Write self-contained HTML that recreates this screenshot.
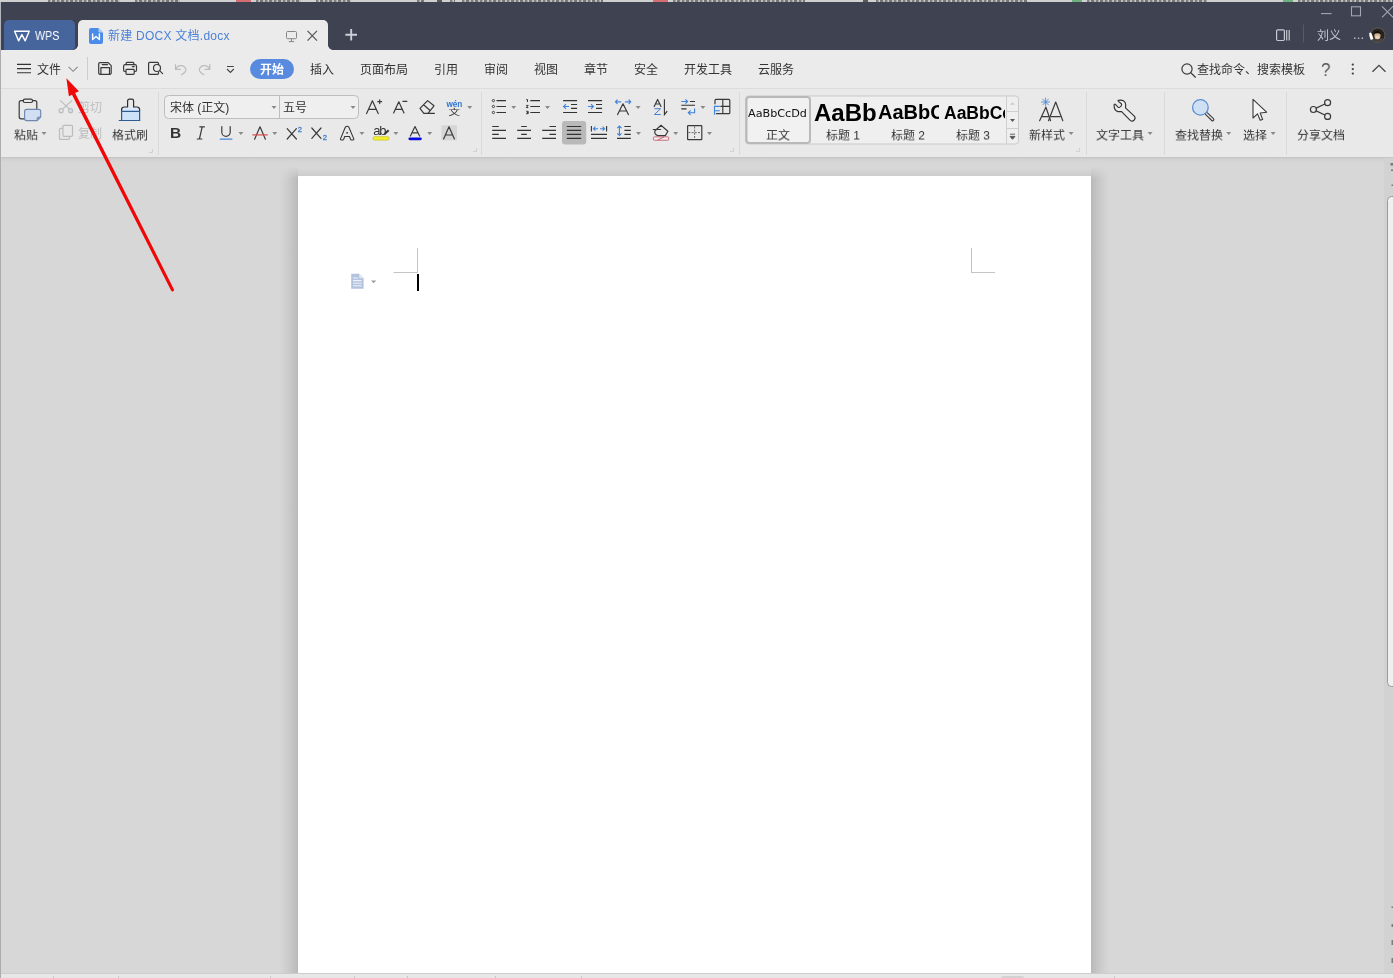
<!DOCTYPE html>
<html lang="zh-CN">
<head>
<meta charset="utf-8">
<title>新建 DOCX 文档.docx - WPS</title>
<style>
html,body{margin:0;padding:0;}
body{width:1393px;height:978px;overflow:hidden;position:relative;background:#d7d7d7;
  font-family:"Liberation Sans","Noto Sans CJK SC",sans-serif;font-size:12px;color:#2b2b2b;}
.abs{position:absolute;}
.t{will-change:transform;position:absolute;white-space:nowrap;line-height:16px;height:16px;font-size:12px;color:#333;}
.g{color:#bdbdbd;}
#topstrip{left:0;top:0;width:1393px;height:2px;background:#d0d0d0;overflow:hidden;}
#topstrip i{position:absolute;top:0;height:2px;opacity:.62}
#titlebar{left:0;top:2px;width:1393px;height:48px;background:#3e4251;}
#leftedge{left:0;top:2px;width:1px;height:976px;background:linear-gradient(#b4b6bd 0,#b4b6bd 48px,#adadad 48px);}
#wpstab{left:4px;top:20px;width:71px;height:29.5px;background:#46659c;border-radius:5px 5px 4px 0;}
#doctab{left:78px;top:20px;width:250px;height:30px;background:#ebebeb;border-radius:5px 5px 0 0;}
.flare{position:absolute;bottom:0;width:5px;height:5px;overflow:hidden;}
#menurow{left:0;top:50px;width:1393px;height:38px;background:#ebebeb;}
#ribbon{left:0;top:88px;width:1393px;height:69px;background:#e9e9e9;border-top:1px solid #dcdcdc;box-sizing:border-box;}
#ribbonshadow{left:0;top:157px;width:1393px;height:6px;background:linear-gradient(#c3c3c3,#d1d1d1 35%,#d7d7d7);}
.vsep{position:absolute;top:92px;width:1px;height:63px;background:#dadada;}
#page{left:298px;top:176px;width:793px;height:830px;background:#fff;}
#docclip{left:1px;top:158px;width:1392px;height:815px;overflow:hidden;}
#status{left:0;top:973px;width:1393px;height:5px;background:#e7e7e7;border-top:1px solid #cdcdcd;box-sizing:border-box;}
#status i{position:absolute;top:2px;width:1px;height:3px;background:#c8c8c8;}
#pill{left:250px;top:59px;width:44px;height:20px;border-radius:10px;background:#588ae0;}
.box{position:absolute;box-sizing:border-box;}

svg .k{stroke:#3a3a3a;fill:none;stroke-width:1.2;stroke-linecap:round;stroke-linejoin:round;}
svg .b{stroke:#4787dc;fill:none;stroke-width:1.2;stroke-linecap:round;stroke-linejoin:round;}
svg .gr{stroke:#bcbcbc;fill:none;stroke-width:1.2;stroke-linecap:round;stroke-linejoin:round;}
svg .w{stroke:#c6cad4;fill:none;stroke-width:1.2;}
svg .ar{fill:#898989;stroke:none;}
svg .kl{stroke:#333;fill:none;stroke-width:1.1;stroke-linecap:butt;stroke-linejoin:miter;}
svg .bl{stroke:#3f82d8;fill:none;stroke-width:1.1;stroke-linecap:butt;stroke-linejoin:miter;}
svg text{font-family:"Liberation Sans","Noto Sans CJK SC",sans-serif;}
</style>
</head>
<body>
<div id="topstrip" class="abs"><i style="left:48px;width:72px;background:repeating-linear-gradient(90deg,#4a4a4a 0 2px,#8e8e8e 2px 3px,#c4c4c4 3px 4px,#3f3f3f 4px 7px,#b0b0b0 7px 9px)"></i><i style="left:135px;width:45px;background:repeating-linear-gradient(90deg,#4a4a4a 0 2px,#8e8e8e 2px 3px,#c4c4c4 3px 4px,#3f3f3f 4px 7px,#b0b0b0 7px 9px)"></i><i style="left:256px;width:45px;background:repeating-linear-gradient(90deg,#4a4a4a 0 2px,#8e8e8e 2px 3px,#c4c4c4 3px 4px,#3f3f3f 4px 7px,#b0b0b0 7px 9px)"></i><i style="left:316px;width:35px;background:repeating-linear-gradient(90deg,#4a4a4a 0 2px,#8e8e8e 2px 3px,#c4c4c4 3px 4px,#3f3f3f 4px 7px,#b0b0b0 7px 9px)"></i><i style="left:417px;width:7px;background:repeating-linear-gradient(90deg,#4a4a4a 0 2px,#8e8e8e 2px 3px,#c4c4c4 3px 4px,#3f3f3f 4px 7px,#b0b0b0 7px 9px)"></i><i style="left:450px;width:5px;background:repeating-linear-gradient(90deg,#4a4a4a 0 2px,#8e8e8e 2px 3px,#c4c4c4 3px 4px,#3f3f3f 4px 7px,#b0b0b0 7px 9px)"></i><i style="left:462px;width:141px;background:repeating-linear-gradient(90deg,#4a4a4a 0 2px,#8e8e8e 2px 3px,#c4c4c4 3px 4px,#3f3f3f 4px 7px,#b0b0b0 7px 9px)"></i><i style="left:673px;width:132px;background:repeating-linear-gradient(90deg,#4a4a4a 0 2px,#8e8e8e 2px 3px,#c4c4c4 3px 4px,#3f3f3f 4px 7px,#b0b0b0 7px 9px)"></i><i style="left:876px;width:151px;background:repeating-linear-gradient(90deg,#4a4a4a 0 2px,#8e8e8e 2px 3px,#c4c4c4 3px 4px,#3f3f3f 4px 7px,#b0b0b0 7px 9px)"></i><i style="left:1087px;width:120px;background:repeating-linear-gradient(90deg,#4a4a4a 0 2px,#8e8e8e 2px 3px,#c4c4c4 3px 4px,#3f3f3f 4px 7px,#b0b0b0 7px 9px)"></i><i style="left:1298px;width:95px;background:repeating-linear-gradient(90deg,#4a4a4a 0 2px,#8e8e8e 2px 3px,#c4c4c4 3px 4px,#3f3f3f 4px 7px,#b0b0b0 7px 9px)"></i><i style="left:236px;width:15px;background:#d8303a"></i><i style="left:653px;width:15px;background:#d8303a"></i><i style="left:437px;width:5px;background:#111"></i><i style="left:863px;width:5px;background:#111"></i><i style="left:1072px;width:10px;background:#2e9c4a"></i><i style="left:1283px;width:10px;background:#2e9c4a"></i></div>
<div id="titlebar" class="abs"></div>
<div id="wpstab" class="abs"></div>
<div id="doctab" class="abs"></div>
<div class="abs" style="left:73px;top:45px;width:5px;height:5px;background:radial-gradient(circle at 0 0,rgba(235,235,235,0) 4.5px,#ebebeb 5.2px)"></div>
<div class="abs" style="left:328px;top:45px;width:5px;height:5px;background:radial-gradient(circle at 100% 0,rgba(235,235,235,0) 4.5px,#ebebeb 5.2px)"></div>
<div id="menurow" class="abs"></div>
<div id="ribbon" class="abs"></div>
<div id="ribbonshadow" class="abs"></div>
<div id="docclip" class="abs">
<div class="abs" style="left:279px;top:9px;width:18px;height:810px;background:linear-gradient(to right,rgba(185,185,185,0),rgba(185,185,185,.36) 45%,#b9b9b9);-webkit-mask-image:linear-gradient(transparent,#000 12px);mask-image:linear-gradient(transparent,#000 12px);"></div>
<div class="abs" style="left:1090px;top:9px;width:18px;height:810px;background:linear-gradient(to left,rgba(185,185,185,0),rgba(185,185,185,.36) 45%,#b9b9b9);-webkit-mask-image:linear-gradient(transparent,#000 12px);mask-image:linear-gradient(transparent,#000 12px);"></div>
<div class="abs" style="left:297px;top:11px;width:793px;height:7px;background:linear-gradient(rgba(204,204,204,0),#cccccc);"></div>
<div id="page" class="abs" style="left:297px;top:18px"></div></div>
<div id="status" class="abs"><i style="left:53px"></i><i style="left:118px"></i><i style="left:270px"></i><i style="left:354px"></i><i style="left:407px"></i><i style="left:495px"></i><i style="left:581px"></i><i style="left:1114px"></i><i style="left:1001px;width:23px;height:2px;top:2px;background:#d2d2d2;border-radius:2px 2px 0 0"></i></div>
<div id="leftedge" class="abs"></div>
<svg class="abs" id="ic1" style="left:0;top:0;will-change:transform" width="1393" height="160" viewBox="0 0 1393 160">
<!-- title bar -->
<path d="M14.6 31.2 H29.2 L25.2 40.8 L21.9 34.6 L18.6 40.8 Z" fill="none" stroke="#fff" stroke-width="1.45" stroke-linejoin="round"/>
<path d="M91 28 h7.5 l4.5 4.5 v9.5 a2 2 0 0 1 -2 2 h-10 a2 2 0 0 1 -2 -2 v-12 a2 2 0 0 1 2 -2 z" fill="#4b8cea"/>
<path d="M98.5 28 l4.5 4.5 h-3.3 a1.2 1.2 0 0 1 -1.2 -1.2 z" fill="#a9c8f5"/>
<path d="M92.6 34 V39.6 L96 36.6 L99.4 39.6 V34" fill="none" stroke="#fff" stroke-width="1.4" stroke-linejoin="round" stroke-linecap="round"/>
<g stroke="#858585" fill="none" stroke-width="1"><rect x="286.5" y="31.5" width="10" height="7.2" rx="1"/><path d="M291.5 39 v2.6 M288.8 41.6 h5.4"/></g>
<path d="M307.5 30.8 L317 40.6 M317 30.8 L307.5 40.6" stroke="#555" stroke-width="1.2" fill="none"/>
<path d="M345.4 34.8 H357 M351.2 29 V40.6" stroke="#cdcfd8" stroke-width="1.9" fill="none"/>
<path d="M1321 13.6 h10.6" stroke="#a3a7b2" stroke-width="1.1"/>
<rect x="1351.5" y="6.8" width="9" height="9" fill="none" stroke="#a3a7b2" stroke-width="1.1"/>
<path d="M1382 6.3 l11 11 M1393 6.3 l-11 11" stroke="#a3a7b2" stroke-width="1.1"/>
<g class="w"><rect x="1276.6" y="29.9" width="7.8" height="10.6" rx="1.2"/><path d="M1286.7 30 v10.5 M1289.2 30 v10.5"/></g>
<path d="M1303.5 24.5 v18" stroke="#575b69" stroke-width="1"/>
<circle cx="1377.7" cy="35.2" r="7.3" fill="#2a231e" stroke="#5a5e5c" stroke-width="1"/>
<path d="M1369.2 33 q1.4 -1 2.4 0.4 l2.2 6 l-3.2 0.4 q-1.6 -3.2 -1.4 -6.8z" fill="#fff"/>
<path d="M1372.2 39.6 a6.5 5 0 0 1 11 0 a7 7 0 0 1 -11 0z" fill="#4b423e"/>
<ellipse cx="1377.4" cy="35.6" rx="3.1" ry="3.7" fill="#d3af8d"/>
<ellipse cx="1377.4" cy="37.2" rx="2.4" ry="1.6" fill="#e6d3c0"/>
<path d="M1373.6 34.4 a3.9 4.4 0 0 1 7.6 0 a5 2.6 0 0 0 -7.6 0z" fill="#120d09"/>
<!-- menu row -->
<path class="kl" stroke-width="1.2" d="M17 64.4 h14 M17 68.6 h14 M17 72.8 h14"/>
<path d="M68.6 66.8 L73.1 71.3 L77.6 66.8" fill="none" stroke="#8a8a8a" stroke-width="1.1"/>
<path d="M87.5 57 v23" stroke="#cdcdcd" stroke-width="1"/>
<g class="k" stroke-width="1.25"><path d="M99.9 62.7 h8.3 l3 3 v7.4 a1.2 1.2 0 0 1 -1.2 1.2 h-10.1 a1.2 1.2 0 0 1 -1.2 -1.2 v-9.2 a1.2 1.2 0 0 1 1.2 -1.2 z"/><path d="M102.2 64.6 h5.4 M100.9 74 v-6.4 h8.6 v6.4"/></g>
<g class="k" stroke-width="1.25"><path d="M126.1 64.6 v-1.2 a1 1 0 0 1 1 -1 h5.8 a1 1 0 0 1 1 1 v1.2"/><rect x="123.6" y="64.7" width="12.9" height="6.8" rx="1.6"/><rect x="126" y="69.4" width="8.2" height="4.9" rx="0.8" fill="#ebebeb"/><path d="M132.4 66.7 h1.8"/></g>
<g class="k" stroke-width="1.25"><path d="M158.5 64.6 v-1.2 a1 1 0 0 0 -1 -1 h-7.9 a1 1 0 0 0 -1 1 v9.9 a1 1 0 0 0 1 1 h7.9 a1 1 0 0 0 1 -1 v-1"/><circle cx="157" cy="68" r="3.5"/><path d="M159.6 70.6 l3 3"/></g>
<g class="gr" stroke-width="1.15"><path d="M175.5 64.6 V69.4 H180.3 M175.9 69 A5.3 5.2 0 0 1 186 69.4 C186 71.6 184 73.2 181.4 74.7"/></g>
<g class="gr" stroke-width="1.15"><path d="M209.8 64.6 V69.4 H205 M209.4 69 A5.3 5.2 0 0 0 199.3 69.4 C199.3 71.6 201.3 73.2 203.9 74.7"/></g>
<path d="M227 66.5 h6.8 M227 69 l3.4 3.5 l3.4 -3.5" fill="none" stroke="#444" stroke-width="1.1"/>
<g class="k" stroke-width="1.3"><circle cx="1187" cy="69" r="5.1"/><path d="M1190.8 72.8 l4.6 4.4"/></g>
<g fill="#444"><circle cx="1352.8" cy="64.6" r="1.15"/><circle cx="1352.8" cy="69.1" r="1.15"/><circle cx="1352.8" cy="73.6" r="1.15"/></g>
<path d="M1372.5 71.8 L1379 65.3 L1385.5 71.8" fill="none" stroke="#444" stroke-width="1.3"/>

<!-- group separators & launchers -->
<g stroke="#dadada" stroke-width="1"><path d="M158.5 92 v63 M481.5 92 v63 M739.5 92 v63 M1086.5 92 v63 M1164.5 92 v63 M1286.5 92 v63"/></g>
<g stroke="#d0d0d0" stroke-width="1" fill="none"><path d="M152.5 149 v3.5 h-3.5 M476.5 148 v3.5 h-3.5 M733.5 148 v3.5 h-3.5 M1079.5 148 v3.5 h-3.5"/></g>
<!-- paste -->
<g class="k" stroke-width="1.25"><path d="M36.8 109 v-6.4 a2 2 0 0 0 -2 -2 h-13.6 a2 2 0 0 0 -2 2 v14.2 a2 2 0 0 0 2 2 h3.4"/><rect x="23.3" y="99.2" width="9.2" height="3.3" rx="1.5" fill="#e9e9e9"/></g>
<path d="M26.6 109.4 h12.1 a2 2 0 0 1 2 2 v5.6 l-3.6 3.6 h-10.5 a2 2 0 0 1 -2 -2 v-7.2 a2 2 0 0 1 2 -2 z" fill="#d2dff2" stroke="#6f88b0" stroke-width="1.15"/>
<path d="M40.7 117 h-2.4 a1.2 1.2 0 0 0 -1.2 1.2 v2.4 z" fill="#8da3c6" stroke="#6f88b0" stroke-width="0.8"/>
<path class="ar" d="M41.5 132.1 h5 l-2.5 2.9 z"/>
<!-- cut / copy -->
<g class="gr" stroke-width="1.15"><path d="M60.4 100.6 L69.3 108.9 M71.9 100.6 L62.8 108.9"/><circle cx="61.1" cy="110.7" r="2"/><circle cx="70.6" cy="110.7" r="2" fill="#cfe3f3"/></g>
<g class="gr" stroke-width="1.15"><rect x="59.5" y="128.4" width="10" height="11" rx="1"/><rect x="62.9" y="125.3" width="9.6" height="11" rx="1" fill="#e9e9e9"/></g>
<!-- format painter -->
<path d="M127.6 107 h-3.4 a2.6 2.6 0 0 0 -2.6 2.6 v1.8 h18 v-1.8 a2.6 2.6 0 0 0 -2.6 -2.6 h-3.4 z" fill="#dbeafb"/>
<rect x="121.6" y="111.4" width="18" height="9" fill="#cde3fa"/>
<g stroke="#2d2d2d" stroke-width="1.2" stroke-linejoin="round" stroke-linecap="round" fill="none"><path d="M121.6 111 v-1.4 a2.6 2.6 0 0 1 2.6 -2.6 h3.4 v-6 a1.8 1.8 0 0 1 1.8 -1.8 h2.4 a1.8 1.8 0 0 1 1.8 1.8 v6 h3.4 a2.6 2.6 0 0 1 2.6 2.6 v1.4"/></g>
<g stroke="#2f5c92" stroke-width="1.2" stroke-linejoin="round" stroke-linecap="round" fill="none"><path d="M121.6 111 v9.4 M139.6 111 v9.4 M121.6 111.4 h18 M119.2 120.5 h20.6"/></g>
<!-- font boxes -->
<rect x="164.5" y="95.5" width="194" height="23" rx="4" fill="#efefef" stroke="#bdbdbd"/>
<path d="M279.5 96 v22" stroke="#bdbdbd"/>
<path class="ar" d="M271.5 106.1 h5 l-2.5 2.9 z M350.5 106.1 h5 l-2.5 2.9 z"/>
<!-- I U A X2 -->
<g class="k" stroke-width="1.3"><path d="M199.8 126.8 h4.6 M197.2 139 h4.6 M202.2 126.8 L199.4 139"/></g>
<path class="k" stroke-width="1.3" d="M221.8 126.6 v5.6 a4.2 4.2 0 0 0 8.4 0 v-5.6"/>
<path class="b" stroke-width="1.3" d="M220.3 139.2 h11.6"/>
<path class="ar" d="M238.4 132.1 h5 l-2.5 2.9 z M272.2 132.1 h5 l-2.5 2.9 z"/>
<path class="k" stroke-width="1.1" d="M254.6 139.2 L260 126.8 L265.4 139.2"/>
<path d="M252.4 134.9 h15.4" stroke="#e04a4a" stroke-width="1.2"/>
<path class="k" d="M287.2 128.6 L296.4 139 M296.4 128.6 L287.2 139"/>
<text x="297.8" y="132" font-size="7.6" fill="#3f7ccf" stroke="#3f7ccf" stroke-width="0.3">2</text>
<path class="k" d="M311.8 128 L321 138.4 M321 128 L311.8 138.4"/>
<text x="322.8" y="140.4" font-size="7.6" fill="#3f7ccf" stroke="#3f7ccf" stroke-width="0.3">2</text>
<!-- A outline -->
<path d="M340.5 138.9 L345.3 127.2 Q347.1 125.3 348.9 127.2 L353.8 138.9 Q353.9 139.9 352.9 139.9 H351.4 Q350.8 139.9 350.5 139.2 L349.5 136.5 H344.7 L343.7 139.2 Q343.4 139.9 342.8 139.9 H341.4 Q340.3 139.9 340.5 138.9 Z" fill="none" stroke="#333" stroke-width="1.05" stroke-linejoin="round"/><circle cx="347.1" cy="132.8" r="0.85" fill="#222"/>
<path class="ar" d="M359.4 132.1 h5 l-2.5 2.9 z M393.4 132.1 h5 l-2.5 2.9 z M427.2 132.1 h5 l-2.5 2.9 z"/>
<!-- highlight -->
<text x="373.2" y="135" font-size="13" fill="#333" letter-spacing="-1.2">ab</text>
<path d="M384.3 134.4 L388.6 130.2" stroke="#333" stroke-width="2"/>
<rect x="373.2" y="136.8" width="15.6" height="3.2" rx="1" fill="#f8f32b" stroke="#c4c020" stroke-width="0.8"/>
<!-- font color -->
<path class="k" stroke-width="1.1" d="M410.4 136 L415 126.6 L419.6 136 M412 132.8 h6"/>
<rect x="408.4" y="137.4" width="13.4" height="2.8" rx="1.4" fill="#0a0adc"/>
<!-- char shading -->
<rect x="441.5" y="125.2" width="15.5" height="15.1" fill="#d6d6d6"/>
<path class="k" stroke-width="1.1" d="M443.6 139 L449 126.8 L454.4 139 M445.4 135 h7.2"/>
<!-- A+ A- eraser wen -->
<path class="k" stroke-width="1.1" d="M366.6 113.6 L372.4 100.8 L378.2 113.6 M368.5 109.4 h7.8"/>
<path class="k" stroke-width="0.9" d="M377.8 101.7 h3.8 M379.7 99.8 v3.8"/>
<path class="k" stroke-width="1.1" d="M393.6 113 L398.8 101.8 L404 113 M395.4 109.4 h6.8"/>
<path class="k" stroke-width="0.9" d="M402.9 101.3 h4"/>
<g class="k" stroke-width="1.1"><path d="M420 108.4 l7.6 -7.8 l6.4 5.2 l-6 7.6 h-4.2 z M423.6 104.8 l6.2 5.4 M424 113.4 h10.4"/></g>
<text x="446.4" y="106.5" font-size="8.2" font-weight="bold" fill="#3176d0">wén</text>
<text transform="translate(448.6,115.3) scale(1,0.68)" font-size="11.6" fill="#333">文</text>
<path class="ar" d="M467.2 106.1 h5 l-2.5 2.9 z"/>
<!-- lists -->
<g class="kl"><circle cx="493.4" cy="100.6" r="1.15" stroke-width="0.9"/><circle cx="493.4" cy="106.5" r="1.15" stroke-width="0.9"/><circle cx="493.4" cy="112.5" r="1.15" stroke-width="0.9"/><path d="M496.5 100.6 h9.5 M496.5 106.5 h9.5 M496.5 112.5 h9.5"/></g>
<path class="ar" d="M511.2 106.1 h5 l-2.5 2.9 z M545 106.1 h5 l-2.5 2.9 z"/>
<g class="kl"><path d="M530.3 100.6 h9.7 M530.3 106.5 h9.7 M530.3 112.5 h9.7"/><path stroke-width="1" d="M526.2 99.6 h1.3 v2.4 M526.2 105.4 h2 l-2 2.2 h2.1 M526.2 111.3 h2 v2.4 h-2.1 M526.8 112.5 h1.4"/></g>
<!-- indents -->
<g class="kl"><path d="M563.1 100.6 h14 M571 104.5 h6.1 M571 108.4 h6.1 M563.1 112.5 h14"/></g>
<path class="bl" d="M569 106.5 h-5.4 M566 104.1 l-2.4 2.4 l2.4 2.4"/>
<g class="kl"><path d="M588 100.6 h14.1 M596 104.5 h6.1 M596 108.4 h6.1 M588 112.5 h14.1"/></g>
<path class="bl" d="M588 106.5 h5.4 M591 104.1 l2.4 2.4 l-2.4 2.4"/>
<!-- char spacing -->
<path class="b" d="M615.4 101.8 h5.4 M617.2 100 l-1.8 1.8 l1.8 1.8 M625.4 101.8 h5.4 M629 100 l1.8 1.8 l-1.8 1.8"/>
<path class="k" stroke-width="1.1" d="M617.6 114.6 L623 103.8 L628.4 114.6 M619.4 111 h7.2"/>
<path class="ar" d="M635.6 106.1 h5 l-2.5 2.9 z"/>
<!-- sort -->
<path class="k" stroke-width="1.05" d="M654.2 106.4 l3.4 -7 l3.4 7 M655.4 104 h4.4"/>
<path d="M654.4 108.7 h6.2 l-6.2 5.8 h6.4" fill="none" stroke="#4781cf" stroke-width="1" stroke-linejoin="round"/>
<path class="kl" stroke-width="1" d="M664.4 99.2 v15.4 l2.8 -3.4"/>
<!-- show marks -->
<path class="bl" d="M681.3 101.5 h6.4 M685.4 99.3 l2.3 2.2 l-2.3 2.2"/>
<path class="kl" d="M690 101.5 h5 M681.3 105.2 h13.7 M681.3 108.9 h5.2"/>
<path class="bl" d="M694.6 108.4 v4.3 h-6.2 M690.6 110.5 l-2.3 2.2 l2.3 2.2"/>
<path class="ar" d="M700.4 106.1 h5 l-2.5 2.9 z"/>
<!-- table -->
<path class="k" stroke-width="1.15" d="M715 103.8 v-3.4 a1 1 0 0 1 1 -1 h12.8 a1 1 0 0 1 1 1 v12.3 a1 1 0 0 1 -1 1 h-12.4"/>
<path class="kl" stroke-width="0.9" d="M722.8 99.6 v14 M720.4 106.4 h9.2"/>
<path class="bl" stroke-width="1.15" d="M719.8 106.4 h-5.3 v8.3 M714.5 110.7 h5.2"/>
<!-- align -->
<g class="kl"><path d="M492.2 126.5 h6.6 M492.2 130.4 h13.8 M492.2 134.4 h6.6 M492.2 138.4 h13.8"/>
<path d="M521.2 126.5 h5.6 M517.2 130.4 h13.8 M521.2 134.4 h5.6 M517.2 138.4 h13.8"/>
<path d="M549.5 126.5 h6.5 M542.2 130.4 h13.8 M549.5 134.4 h6.5 M542.2 138.4 h13.8"/></g>
<rect x="562" y="121" width="24.2" height="23.6" rx="3" fill="#b9b9b9"/>
<path class="kl" d="M566.8 126.5 h14.4 M566.8 130.4 h14.4 M566.8 134.4 h14.4 M566.8 138.4 h14.4"/>
<path class="kl" d="M591.4 126 v5.4 M606.6 126 v5.4 M591 134.4 h16 M591 138.4 h16"/>
<path class="bl" d="M593.4 128.7 h4.6 M595.4 126.7 l-2 2 l2 2 M600 128.7 h4.6 M602.6 126.7 l2 2 l-2 2"/>
<path class="bl" d="M619.4 126 v9.4 M617.3 128.1 l2.1 -2.1 l2.1 2.1 M617.3 133.3 l2.1 2.1 l2.1 -2.1"/>
<path class="kl" d="M624.4 126.5 h6.4 M624.4 130.4 h6.4 M624.4 134.4 h6.4 M617 138.4 h13.8" />
<path class="ar" d="M636 132.1 h5 l-2.5 2.9 z M673.2 132.1 h5 l-2.5 2.9 z M707 132.1 h5 l-2.5 2.9 z"/>
<!-- shading bucket -->
<path class="k" stroke-width="1.1" d="M655 130.8 L661 125.3 L667.9 131.2 L665.3 135.6 H657.8 C655 134.6 654.2 132.6 655 130.8 Z M653.2 129.5 h7.4"/>
<rect x="653.4" y="136.9" width="15.3" height="3.3" rx="0.8" fill="#f6f1f2" stroke="#c45a6a" stroke-width="0.9"/>
<path d="M657.6 140 l6.4 -3" stroke="#c45a6a" stroke-width="0.9"/>
<!-- borders -->
<rect class="k" stroke-width="1.1" x="687.6" y="125.6" width="14.2" height="14" rx="0.6"/>
<path d="M694.6 126.4 v12.6 M688.4 132.6 h12.6" stroke="#5a5a5a" stroke-width="0.9" stroke-dasharray="2 1.2" fill="none"/>
<!-- styles gallery -->
<rect x="745.5" y="96" width="273" height="48" rx="3" fill="#efefef" stroke="#c9c9c9"/>
<rect x="746.5" y="97" width="63.5" height="46" rx="3" fill="#f1f1f1" stroke="#b9b9b9" stroke-width="2"/>
<path d="M1006.5 96.5 v47 M1006.5 111.5 h12 M1006.5 128.5 h12" stroke="#cfcfcf" fill="none"/>
<path d="M1010 104.8 h5 l-2.5 -2.8 z" fill="#cdcdcd"/>
<path d="M1010 119 h5 l-2.5 2.9 z" fill="#555"/>
<path d="M1010 134.2 h5 M1010 136.4 h5 l-2.5 2.9 z" fill="#555" stroke="#555" stroke-width="0.9"/>
<!-- new style -->
<path class="k" stroke-width="1" d="M1039.6 120.7 L1045.9 107.2 L1050.6 120.7 M1042 116.6 h7"/>
<path class="k" stroke-width="1" d="M1048.5 120.7 L1055.7 102 L1062.8 120.7 M1051.4 116.6 h8.6"/>
<path d="M1045.6 97.6 v8.8 M1041.2 102 h8.8 M1042.5 98.9 l6.2 6.2 M1048.7 98.9 l-6.2 6.2" stroke="#4688dc" stroke-width="0.85" fill="none"/>
<path class="ar" d="M1068.6 132.1 h5 l-2.5 2.9 z M1147.6 132.1 h5 l-2.5 2.9 z M1226.2 132.1 h5 l-2.5 2.9 z M1270.6 132.1 h5 l-2.5 2.9 z"/>
<!-- wrench -->
<path d="M1118.3 100.4 C1120.5 100 1122.4 100.2 1123.4 100.8 C1125 101.8 1125.8 103 1125.7 104.6 L1125.5 107.8 L1134.3 116.2 A2.95 2.95 0 0 1 1130.2 120.4 L1121.6 111.6 L1118 111.6 C1115.5 111 1114 108 1114.1 104.8 C1114.2 104.1 1115 104 1115.4 104.4 L1118 107.1 C1118.6 107.6 1119.2 107.6 1119.8 107.1 L1121.2 105.8 C1121.8 105 1121.8 104.3 1121.3 103.7 L1118.4 101.4 C1118 101 1118 100.5 1118.3 100.4 Z" fill="#ececec" stroke="#333" stroke-width="1.15" stroke-linejoin="round"/>
<!-- find -->
<path d="M1206.6 113.8 L1212.6 119.6" stroke="#3a3a3a" stroke-width="3.6" stroke-linecap="round"/>
<path d="M1206.6 113.8 L1212.6 119.6" stroke="#e9e9e9" stroke-width="1.4" stroke-linecap="round"/>
<circle cx="1200.4" cy="107.4" r="7.8" fill="#cfe0f5" stroke="#5a8dd0" stroke-width="1.25"/>
<!-- select -->
<path d="M1253 99.4 V118 L1257.5 113.9 L1260.2 120.3 L1262.6 119.4 L1260.2 113 L1266.6 112.2 Z" fill="#f4f4f4" stroke="#3a3a3a" stroke-width="1.1" stroke-linejoin="round"/>
<!-- share -->
<g class="k" stroke-width="1.15"><path d="M1316.2 108.1 L1324.8 104 M1316.2 110.9 L1324.8 115"/><circle cx="1327.6" cy="102.7" r="3"/><circle cx="1313.4" cy="109.5" r="3"/><circle cx="1327.6" cy="116.4" r="3"/></g>

</svg>

<div class="t" style="left:35px;top:28px;color:#fff;font-size:13px;transform:scaleX(.82);transform-origin:0 0">WPS</div>
<div class="t" id="doctitle" style="left:108px;top:28px;color:#4d80d9;font-size:12px;letter-spacing:.25px">新建 DOCX 文档.docx</div>
<div class="t" style="left:1317px;top:28px;color:#c2c6d0;font-size:12px">刘义</div>
<div class="t" style="left:1353px;top:27px;color:#c2c6d0;font-size:13px;letter-spacing:.2px">...</div>

<div class="t" style="left:37px;top:62px">文件</div>
<div id="pill" class="abs"></div>
<div class="t" style="left:260px;top:62px;color:#fff;font-weight:bold">开始</div>
<div class="t" style="left:310px;top:62px">插入</div>
<div class="t" style="left:360px;top:62px">页面布局</div>
<div class="t" style="left:434px;top:62px">引用</div>
<div class="t" style="left:484px;top:62px">审阅</div>
<div class="t" style="left:534px;top:62px">视图</div>
<div class="t" style="left:584px;top:62px">章节</div>
<div class="t" style="left:634px;top:62px">安全</div>
<div class="t" style="left:684px;top:62px">开发工具</div>
<div class="t" style="left:758px;top:62px">云服务</div>
<div class="t" style="left:1197px;top:62px">查找命令、搜索模板</div>
<div class="t" style="left:1321px;top:60px;font-size:18.5px;line-height:20px;height:20px;color:#505050;transform:scaleX(.92);transform-origin:0 0">?</div>

<div class="t" style="left:14px;top:128px;transform:scaleY(.94);transform-origin:0 3px">粘贴</div>
<div class="t g" style="left:78px;top:100px">剪切</div>
<div class="t g" style="left:78px;top:126px">复制</div>
<div class="t" style="left:112px;top:128px;transform:scaleY(.94);transform-origin:0 3px">格式刷</div>
<div class="t" style="left:170px;top:100px">宋体 (正文)</div>
<div class="t" style="left:283px;top:100px">五号</div>
<div class="t" style="left:766px;top:128px;transform:scaleY(.94);transform-origin:0 3px">正文</div>
<div class="t" style="left:826px;top:128px;transform:scaleY(.94);transform-origin:0 3px">标题 1</div>
<div class="t" style="left:891px;top:128px;transform:scaleY(.94);transform-origin:0 3px">标题 2</div>
<div class="t" style="left:956px;top:128px;transform:scaleY(.94);transform-origin:0 3px">标题 3</div>
<div class="t" style="left:1029px;top:128px;transform:scaleY(.94);transform-origin:0 3px">新样式</div>
<div class="t" style="left:1096px;top:128px;transform:scaleY(.94);transform-origin:0 3px">文字工具</div>
<div class="t" style="left:1175px;top:128px;transform:scaleY(.94);transform-origin:0 3px">查找替换</div>
<div class="t" style="left:1243px;top:128px;transform:scaleY(.94);transform-origin:0 3px">选择</div>
<div class="t" style="left:1297px;top:128px;transform:scaleY(.94);transform-origin:0 3px">分享文档</div>

<div class="t" style="left:170px;top:124px;font-size:15.5px;line-height:18px;height:18px;font-weight:bold;color:#333">B</div>
<div class="t" style="left:748px;top:105px;font-family:'DejaVu Sans','Liberation Sans',sans-serif;font-size:11.2px;line-height:18px;height:18px;color:#111">AaBbCcDd</div>
<div class="t" style="left:813.5px;top:98px;width:62px;overflow:hidden;font-weight:bold;font-size:24px;line-height:30px;height:30px;color:#000">AaBbC</div>
<div class="t" style="left:878px;top:97px;width:61px;overflow:hidden;font-weight:bold;font-size:20px;line-height:30px;height:30px;color:#000">AaBbCc</div>
<div class="t" style="left:943.5px;top:98px;width:61px;overflow:hidden;font-weight:bold;font-size:17.5px;line-height:30px;height:30px;color:#000">AaBbCcD</div>
<!--TEXT-->



<svg class="abs" id="ic2" style="left:0;top:158px;will-change:transform" width="1393" height="820" viewBox="0 158 1393 820">
<!-- margin marks -->
<path d="M417.5 248 v24.5 M393.5 272.5 h24.5 M971.5 248 v24.5 M971 272.5 h24" stroke="#c4c4c4" stroke-width="1" fill="none"/>
<rect x="417" y="274" width="2" height="17" fill="#000"/>
<!-- small doc icon -->
<path d="M351.2 273.8 h8 l4.4 4.4 v10.6 h-12.4 z" fill="#b3c3dd"/>
<path d="M359.2 273.8 l4.4 4.4 h-4.4 z" fill="#dfe7f3"/>
<path d="M353 278 h5 M353 280.6 h8.6 M353 283.2 h8.6 M353 285.8 h8.6" stroke="#eef2f9" stroke-width="1.1"/>
<path d="M371 280.4 h5.2 l-2.6 2.8 z" fill="#9a9a9a"/>
<!-- scrollbar -->
<rect x="1384" y="158" width="9" height="815" fill="#d2d2d2"/>
<rect x="1387.5" y="196.5" width="12" height="490" rx="4" fill="#f0f0f0" stroke="#9a9a9a"/>
<path d="M1390.5 163 h3 v2.4 h-3z M1391 169.5 h2 v1.6 h-2z M1391.5 184.5 h2 v1.6 h-2z" fill="#7a7a7a"/>
<path d="M1391.5 906.5 h2 v1.6 h-2z M1391.5 924 h2 v3 h-2z M1391.5 940 h2 v5 h-2z M1391.5 958 h2 v5 h-2z" fill="#7d7d7d"/>
</svg>
<svg class="abs" id="arrow" style="left:0;top:0" width="200" height="300" viewBox="0 0 200 300">
<path d="M66.4 78.2 L78.9 91.2 L75.1 93.1 L174.0 289.4 A1.6 1.6 0 0 1 171.2 290.8 L72.0 94.7 L68.9 96.2 Z" fill="#f00808"/>
</svg>
<!--ICONS-->
</body>
</html>
